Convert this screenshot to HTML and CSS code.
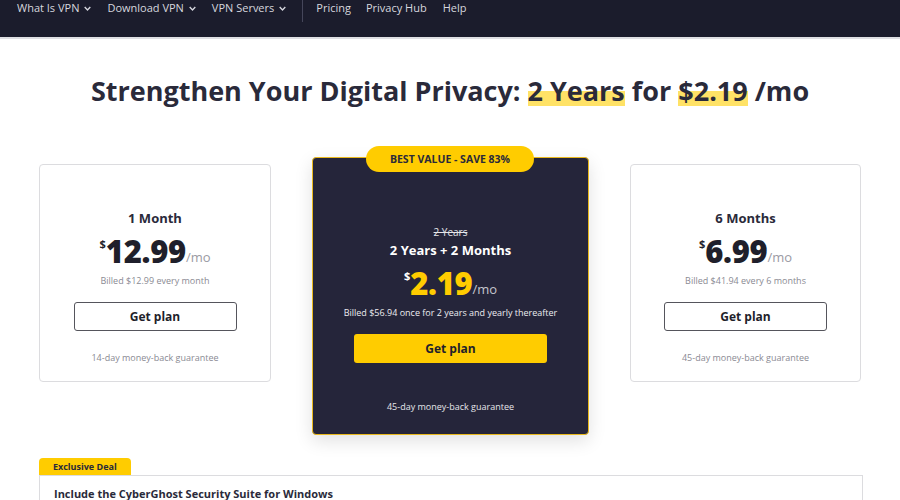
FILE: index.html
```html
<!DOCTYPE html>
<html>
<head>
<meta charset="utf-8">
<link rel="stylesheet" href="styles.css">
</head>
<body>
<header class="nav">
  <ul class="nav-list">
    <li class="nav-item">What Is VPN <svg class="chev" viewBox="0 0 10 6" width="7" height="5"><path d="M1 1l4 4 4-4" fill="none" stroke="currentColor" stroke-width="2"/></svg></li>
    <li class="nav-item">Download VPN <svg class="chev" viewBox="0 0 10 6" width="7" height="5"><path d="M1 1l4 4 4-4" fill="none" stroke="currentColor" stroke-width="2"/></svg></li>
    <li class="nav-item">VPN Servers <svg class="chev" viewBox="0 0 10 6" width="7" height="5"><path d="M1 1l4 4 4-4" fill="none" stroke="currentColor" stroke-width="2"/></svg></li>
    <li class="nav-sep"></li>
    <li class="nav-item">Pricing</li>
    <li class="nav-item">Privacy Hub</li>
    <li class="nav-item">Help</li>
  </ul>
</header>

<main class="main">
  <h1 class="title">Strengthen Your Digital Privacy: <span class="hl">2 Years</span> for <span class="hl">$2.19</span> /mo</h1>

  <section class="plans">
    <div class="card side">
      <div class="plan-name">1 Month</div>
      <div class="price"><span class="cur">$</span><span class="amt">12.99</span><span class="per">/mo</span></div>
      <div class="billed">Billed $12.99 every month</div>
      <div class="btn outline">Get plan</div>
      <div class="guarantee">14-day money-back guarantee</div>
    </div>

    <div class="card featured">
      <div class="badge">BEST VALUE - SAVE 83%</div>
      <div class="old">2 Years</div>
      <div class="plan-name light">2 Years + 2 Months</div>
      <div class="price"><span class="cur">$</span><span class="amt gold">2.19</span><span class="per">/mo</span></div>
      <div class="billed light">Billed $56.94 once for 2 years and yearly thereafter</div>
      <div class="btn yellow">Get plan</div>
      <div class="guarantee light">45-day money-back guarantee</div>
    </div>

    <div class="card side">
      <div class="plan-name">6 Months</div>
      <div class="price"><span class="cur">$</span><span class="amt">6.99</span><span class="per">/mo</span></div>
      <div class="billed">Billed $41.94 every 6 months</div>
      <div class="btn outline">Get plan</div>
      <div class="guarantee">45-day money-back guarantee</div>
    </div>
  </section>

  <section class="deal">
    <div class="deal-tab">Exclusive Deal</div>
    <div class="deal-box">
      <div class="deal-title">Include the CyberGhost Security Suite for Windows</div>
    </div>
  </section>
</main>
</body>
</html>
```

FILE: styles.css
```css
* { box-sizing: border-box; }
html, body { margin: 0; padding: 0; }
body {
  background: #ffffff;
  font-family: "Open Sans", "Noto Sans", sans-serif;
  color: #2a2a3a;
  width: 900px;
  height: 500px;
  overflow: hidden;
}

.nav {
  height: 39px;
  background: #1b1c2c;
  border-bottom: 2px solid #dedfe3;
}
.nav-list {
  list-style: none;
  margin: 0;
  padding: 0 0 0 17px;
  display: flex;
  align-items: flex-start;
  height: 37px;
}
.nav-item {
  color: #d6d7de;
  font-size: 11px;
  line-height: 16px;
  margin-right: 16px;
  display: flex;
  align-items: center;
  gap: 5px;
  white-space: nowrap;
}
.nav-item:nth-child(5) { margin-right: 15px; }
.chev { display: block; }
.nav-sep {
  width: 1px;
  height: 22px;
  background: #45465a;
  margin: 0 13px 0 0;
}

.title {
  margin: 36px 0 0;
  text-align: center;
  font-size: 27px;
  font-weight: 700;
  line-height: 32px;
  color: #2a2a3a;
}
.hl {
  background: linear-gradient(transparent 52%, #ffe266 52%, #ffe266 92%, transparent 92%);
}

.plans {
  display: flex;
  align-items: flex-start;
  gap: 41px;
  padding-left: 39px;
  margin-top: 50px;
}
.card {
  display: flex;
  flex-direction: column;
  align-items: center;
  border-radius: 4px;
  position: relative;
}
.side {
  width: 232px;
  height: 218px;
  margin-top: 7px;
  border: 1px solid #dcdcdf;
  padding-top: 44px;
}
.side:last-child { width: 231px; }
.featured {
  width: 277px;
  height: 278px;
  background: #25253a;
  border: 1.5px solid #e9b81c;
  box-shadow: 0 6px 18px rgba(0,0,0,0.12);
  padding-top: 68px;
}
.badge {
  position: absolute;
  top: -12px;
  left: 53px;
  width: 168px;
  height: 26px;
  background: #ffcc00;
  border-radius: 13px;
  color: #2a2a3a;
  font-size: 10.5px;
  font-weight: 700;
  line-height: 26px;
  text-align: center;
}
.old {
  font-size: 10px;
  line-height: 13px;
  color: #e6e6ea;
  text-decoration: line-through;
}
.plan-name {
  font-size: 13px;
  font-weight: 700;
  line-height: 18px;
  color: #2a2a3a;
}
.plan-name.light { color: #ffffff; margin-top: 2px; }
.price {
  display: flex;
  align-items: flex-start;
  margin-top: 7px;
  height: 34px;
}
.cur {
  font-size: 11px;
  font-weight: 700;
  line-height: 14px;
  margin-top: 3px;
  color: #1f1f2b;
}
.featured .cur { color: #ffffff; }
.amt {
  font-size: 31px;
  font-weight: 800;
  line-height: 34px;
  color: #1f1f2b;
  letter-spacing: -0.3px;
}
.amt.gold { color: #ffcc00; }
.per {
  font-size: 13px;
  color: #9a9aa3;
  align-self: flex-end;
  line-height: 16px;
  margin-bottom: 3px;
}
.featured .per { color: #c6c6ce; }
.billed {
  margin-top: 7px;
  font-size: 9px;
  line-height: 12px;
  color: #8a8a93;
}
.billed.light { color: #ececf0; margin-top: 7px; }
.btn {
  height: 29px;
  border-radius: 3px;
  display: flex;
  align-items: center;
  justify-content: center;
  font-size: 12px;
  font-weight: 700;
  color: #1f1f2b;
}
.outline {
  margin-top: 15px;
  width: 163px;
  border: 1px solid #55555c;
}
.yellow {
  margin-top: 15px;
  width: 193px;
  background: #ffcc00;
}
.guarantee {
  margin-top: 21px;
  font-size: 9px;
  line-height: 12px;
  color: #8a8a93;
}
.guarantee.light { color: #e6e6ea; margin-top: 38px; }

.deal {
  margin: 23px 0 0 39px;
  width: 824px;
  display: flex;
  flex-direction: column;
  align-items: flex-start;
}
.deal-tab {
  background: #ffcc00;
  border-radius: 4px 4px 0 0;
  padding: 0 14px;
  height: 17px;
  line-height: 17px;
  font-size: 9px;
  font-weight: 700;
  color: #2a2a3a;
}
.deal-box {
  align-self: stretch;
  border: 1px solid #dcdcdf;
  border-bottom: none;
  height: 40px;
  padding: 12px 0 0 14px;
}
.deal-title {
  font-size: 11px;
  font-weight: 700;
  line-height: 12px;
  color: #2a2a3a;
}
```
